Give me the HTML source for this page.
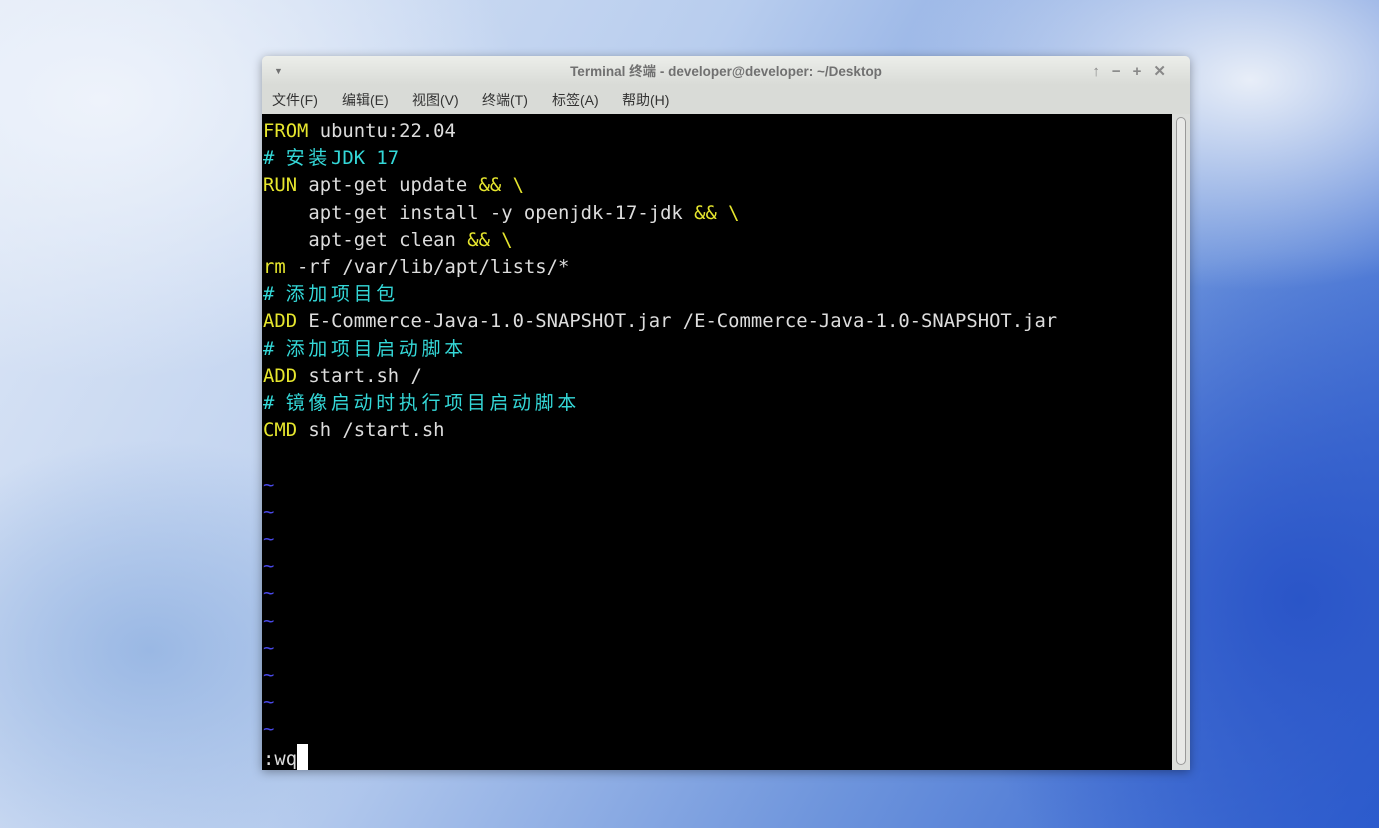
<!DOCTYPE html>
<html><head><meta charset="utf-8"><style>
html,body{margin:0;padding:0;width:1379px;height:828px;overflow:hidden}
body{position:relative;background:
radial-gradient(ellipse 500px 300px at 1250px 80px,#e8eef8 0%,rgba(232,238,248,0) 70%),
radial-gradient(ellipse 500px 500px at 1300px 600px,#2a55c8 0%,rgba(42,85,200,0) 70%),
radial-gradient(ellipse 600px 400px at 100px 100px,#eef3fb 0%,rgba(238,243,251,0) 70%),
radial-gradient(ellipse 400px 300px at 150px 650px,#9ab8e4 0%,rgba(154,184,228,0) 70%),
linear-gradient(120deg,#dfe8f6 0%,#b8cdee 40%,#6d94dc 70%,#2c5dcf 100%)}
.win{position:absolute;left:262px;top:56px;width:928px;height:714px;background:#d8dad6;border-radius:5px 5px 0 0;box-shadow:0 2px 10px rgba(0,0,0,.35);overflow:hidden}
.title{height:29px;background:linear-gradient(#eceeea,#d9dbd7);font:600 13.5px "Liberation Sans","Noto Sans CJK SC",sans-serif;color:#707070;text-align:center;line-height:31px;position:relative}
.title .l{position:absolute;left:12px;top:0;font-size:9px}
.title .r{position:absolute;right:12px;top:0;font-size:15px;color:#888;letter-spacing:12px}
.menu{height:29px;background:#d9dbd7;font:14px "Liberation Sans","Noto Sans CJK SC",sans-serif;color:#333;line-height:30px;padding-left:10px}
.menu span{display:inline-block;width:70px}
.term{position:absolute;left:0;top:58px;width:910px;height:656px;background:#000;font:18.85px "DejaVu Sans Mono","Noto Sans CJK SC",monospace;color:#ddd;white-space:pre;line-height:27.2px;padding:4px 0 0 1px;box-sizing:border-box}
.sb{position:absolute;left:910px;top:58px;width:18px;height:656px;background:#dcdedb}
.sb div{position:absolute;left:4px;top:3px;width:8px;height:646px;border:1px solid #999;border-radius:6px;background:#e8e9e7}
.y{color:#e6e62e}.c{color:#34d8d8}.b{color:#4848e8}
.k{letter-spacing:3.8px}
.cur{display:inline-block;width:11px;height:26px;background:#fff;vertical-align:-5px}
</style></head><body>
<div class="win">
<div class="title"><span class="l">▼</span>Terminal 终端 - developer@developer: ~/Desktop<span class="r">↑−+✕</span></div>
<div class="menu"><span>文件(F)</span><span>编辑(E)</span><span>视图(V)</span><span>终端(T)</span><span>标签(A)</span><span>帮助(H)</span></div>
<div class="term"><span class="y">FROM</span> ubuntu:22.04
<span class="c"># <span class="k">安装</span>JDK 17</span>
<span class="y">RUN</span> apt-get update <span class="y">&amp;&amp; \</span>
    apt-get install -y openjdk-17-jdk <span class="y">&amp;&amp; \</span>
    apt-get clean <span class="y">&amp;&amp; \</span>
<span class="y">rm</span> -rf /var/lib/apt/lists/*
<span class="c"># <span class="k">添加项目包</span></span>
<span class="y">ADD</span> E-Commerce-Java-1.0-SNAPSHOT.jar /E-Commerce-Java-1.0-SNAPSHOT.jar
<span class="c"># <span class="k">添加项目启动脚本</span></span>
<span class="y">ADD</span> start.sh /
<span class="c"># <span class="k">镜像启动时执行项目启动脚本</span></span>
<span class="y">CMD</span> sh /start.sh

<span class="b">~</span>
<span class="b">~</span>
<span class="b">~</span>
<span class="b">~</span>
<span class="b">~</span>
<span class="b">~</span>
<span class="b">~</span>
<span class="b">~</span>
<span class="b">~</span>
<span class="b">~</span>
:wq<span class="cur"></span></div>
<div class="sb"><div></div></div>
</div>
</body></html>
